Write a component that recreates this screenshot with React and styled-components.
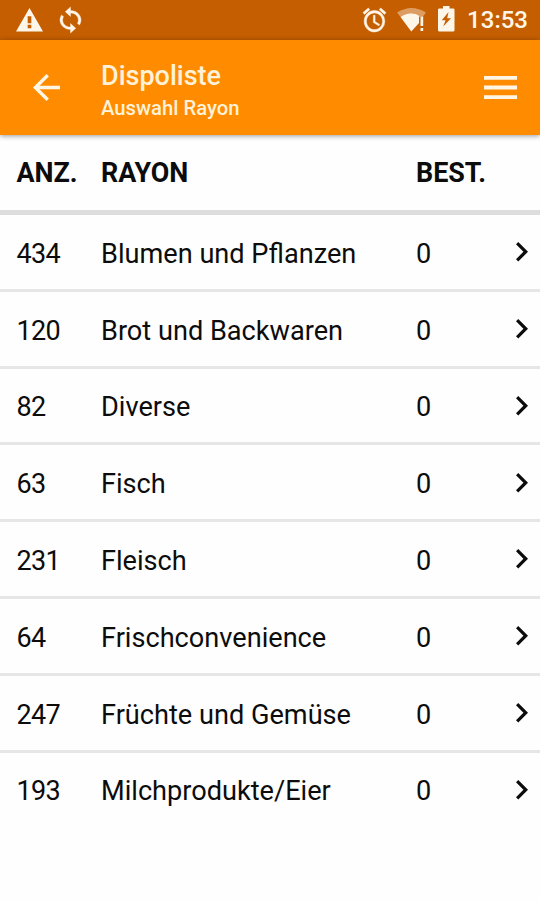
import styled, { createGlobalStyle } from 'styled-components';

const GlobalStyle = createGlobalStyle`
  * {
    box-sizing: border-box;
  }

  body {
    margin: 0;
    background-color: #fefefe;
    font-family: Roboto, 'Liberation Sans', sans-serif;
  }
`;

// styled components
const Screen = styled.div`
  width: 540px;
  height: 900px;
  overflow: hidden;
  background-color: #fefefe;
  color: #0c0c0c;
`;

const StatusBar = styled.div`
  display: flex;
  justify-content: space-between;
  height: 40px;
  padding: 0 12px 0 16px;
  background-color: #c45e00;
  color: #fff6ea;
`;

const StatusGroup = styled.div`
  display: flex;
  align-items: flex-start;
`;

const Icon = styled.svg`
  display: block;
  flex: none;
  width: ${props => props.$w}px;
  height: ${props => props.$h}px;
  margin-top: ${props => props.$top || 0}px;
  margin-left: ${props => props.$left || 0}px;
  fill: currentColor;
  stroke: currentColor;
  stroke-width: ${props => props.$stroke || 0};
  overflow: visible;
`;

const Clock = styled.span`
  margin-left: 12.5px;
  font-size: 24px;
  font-weight: 500;
  line-height: 41px;
`;

const AppBar = styled.header`
  position: relative;
  display: flex;
  align-items: center;
  height: 94.5px;
  padding: 0 23px 0 33px;
  background-color: #ff8c00;
  color: #fff6e6;
  box-shadow: 0 1px 5px rgba(0, 0, 0, .4);
`;

const Titles = styled.div`
  flex: 1;
  margin-left: 41px;
  padding-top: 8px;
  color: #fff2d8;
`;

const Title = styled.h1`
  margin: 0;
  font-size: 27px;
  font-weight: 500;
  line-height: 34px;
`;

const Subtitle = styled.div`
  font-size: 20.3px;
  font-weight: 500;
  line-height: 31px;
`;

const Row = styled.div`
  display: grid;
  grid-template-columns: 84.5px 315px 1fr auto;
  align-items: center;
  height: 76.8px;
  padding: 0 12.5px 0 16.5px;
  border-bottom: 3px solid ${props => props.$last ? 'transparent' : '#e6e6e6'};
  font-size: 27.15px;
`;

const HeadRow = styled(Row)`
  height: 80.5px;
  padding-top: 2px;
  border-bottom: 5px solid #dddddd;
  font-size: 26.9px;
  font-weight: 700;
`;

const Cell = styled.span`
  padding-top: 4px;
`;

const CountCell = styled(Cell)`
  font-size: 27px;
  letter-spacing: -.7px;
`;

// data
const rayons = [
  { count: 434, name: 'Blumen und Pflanzen', ordered: 0 },
  { count: 120, name: 'Brot und Backwaren', ordered: 0 },
  { count: 82, name: 'Diverse', ordered: 0 },
  { count: 63, name: 'Fisch', ordered: 0 },
  { count: 231, name: 'Fleisch', ordered: 0 },
  { count: 64, name: 'Frischconvenience', ordered: 0 },
  { count: 247, name: 'Früchte und Gemüse', ordered: 0 },
  { count: 193, name: 'Milchprodukte/Eier', ordered: 0 },
];

// icons
const WarningIcon = () => (
  <Icon $w={27} $h={23.5} $top={7.5} viewBox="1 2 22 19" preserveAspectRatio="none">
    <path d="M1 21h22L12 2 1 21zm12.5-2.6h-3v-2.8h3v2.8zm0-4h-3V8.6h3v5.8z" />
  </Icon>
);

const SyncIcon = () => (
  <Icon $w={21} $h={26} $top={6.5} $left={17} $stroke={.3} viewBox="4 1 16 22" preserveAspectRatio="none">
    <path d="M12 4V1L8 5l4 4V6c3.31 0 6 2.69 6 6 0 1.01-.25 1.97-.7 2.8l1.46 1.46C19.54 15.03 20 13.57 20 12c0-4.42-3.58-8-8-8zm0 14c-3.31 0-6-2.69-6-6 0-1.01.25-1.97.7-2.8L5.24 7.74C4.46 8.97 4 10.43 4 12c0 4.42 3.58 8 8 8v3l4-4-4-4v3z" />
  </Icon>
);

const AlarmIcon = () => (
  <Icon $w={23} $h={24} $top={8} $stroke={.4} viewBox="2 1.9 20 20.1" preserveAspectRatio="none">
    <path d="M22 5.72l-4.6-3.86-1.29 1.53 4.6 3.86L22 5.72zM7.88 3.39L6.6 1.86 2 5.71l1.29 1.53 4.59-3.85zM12.5 8H11v6l4.75 2.85.75-1.23-4-2.37V8zM12 4c-4.97 0-9 4.03-9 9s4.02 9 9 9a9 9 0 0 0 0-18zm0 16c-3.87 0-7-3.13-7-7s3.13-7 7-7 7 3.13 7 7-3.13 7-7 7z" />
  </Icon>
);

const WifiIcon = () => (
  <Icon $w={30} $h={24} $top={8} $left={11} viewBox="0 0 30 24">
    <path opacity=".42" d="M0 4.5Q14.5 -4.5 29 4.5L26 8.5H23.5Q14 2 3.5 9Z" />
    <path d="M3.5 9Q14 2 23.5 8.5H22V15L14.3 23.5Z" />
    <path d="M23.5 8.6h2.7v9.4h-2.7zM23.5 20h2.7v3h-2.7z" />
  </Icon>
);

const BatteryIcon = () => (
  <Icon $w={16.5} $h={25.5} $top={6} $left={11} viewBox="0 0 16.5 25.5">
    <path
      fillRule="evenodd"
      d="M5 0h6.5v2.5h3.7q1.3 0 1.3 1.3v20.4q0 1.3-1.3 1.3H1.3Q0 25.5 0 24.2V3.8Q0 2.5 1.3 2.5H5zM10.5 6L3.8 14.3H7.6L5.2 20.5L13 12.2H9.2z"
    />
  </Icon>
);

const BackIcon = () => (
  <Icon $w={27} $h={27} viewBox="4 4 16 16">
    <path d="M20 11H7.83l5.59-5.59L12 4l-8 8 8 8 1.41-1.41L7.83 13H20v-2z" />
  </Icon>
);

const MenuIcon = () => (
  <Icon $w={33} $h={23} viewBox="3 6 18 12" preserveAspectRatio="none">
    <path d="M3 18h18v-2H3v2zm0-5h18v-2H3v2zm0-7v2h18V6H3z" />
  </Icon>
);

const ChevronIcon = () => (
  <Icon $w={12} $h={19.5} viewBox="8.59 6 7.41 12" preserveAspectRatio="none">
    <path d="M10 6L8.59 7.41 13.17 12l-4.58 4.59L10 18l6-6z" />
  </Icon>
);

// component
const App = () => {
  return (
    <>
      <GlobalStyle />
      <Screen>
        <StatusBar>
          <StatusGroup>
            <WarningIcon />
            <SyncIcon />
          </StatusGroup>
          <StatusGroup>
            <AlarmIcon />
            <WifiIcon />
            <BatteryIcon />
            <Clock>13:53</Clock>
          </StatusGroup>
        </StatusBar>

        <AppBar>
          <BackIcon />
          <Titles>
            <Title>Dispoliste</Title>
            <Subtitle>Auswahl Rayon</Subtitle>
          </Titles>
          <MenuIcon />
        </AppBar>

        <HeadRow>
          <span>ANZ.</span>
          <span>RAYON</span>
          <span>BEST.</span>
        </HeadRow>
        {rayons.map((rayon, i) => (
          <Row key={rayon.name} $last={i === rayons.length - 1}>
            <CountCell>{rayon.count}</CountCell>
            <Cell>{rayon.name}</Cell>
            <Cell>{rayon.ordered}</Cell>
            <ChevronIcon />
          </Row>
        ))}
      </Screen>
    </>
  );
}

export default App;
